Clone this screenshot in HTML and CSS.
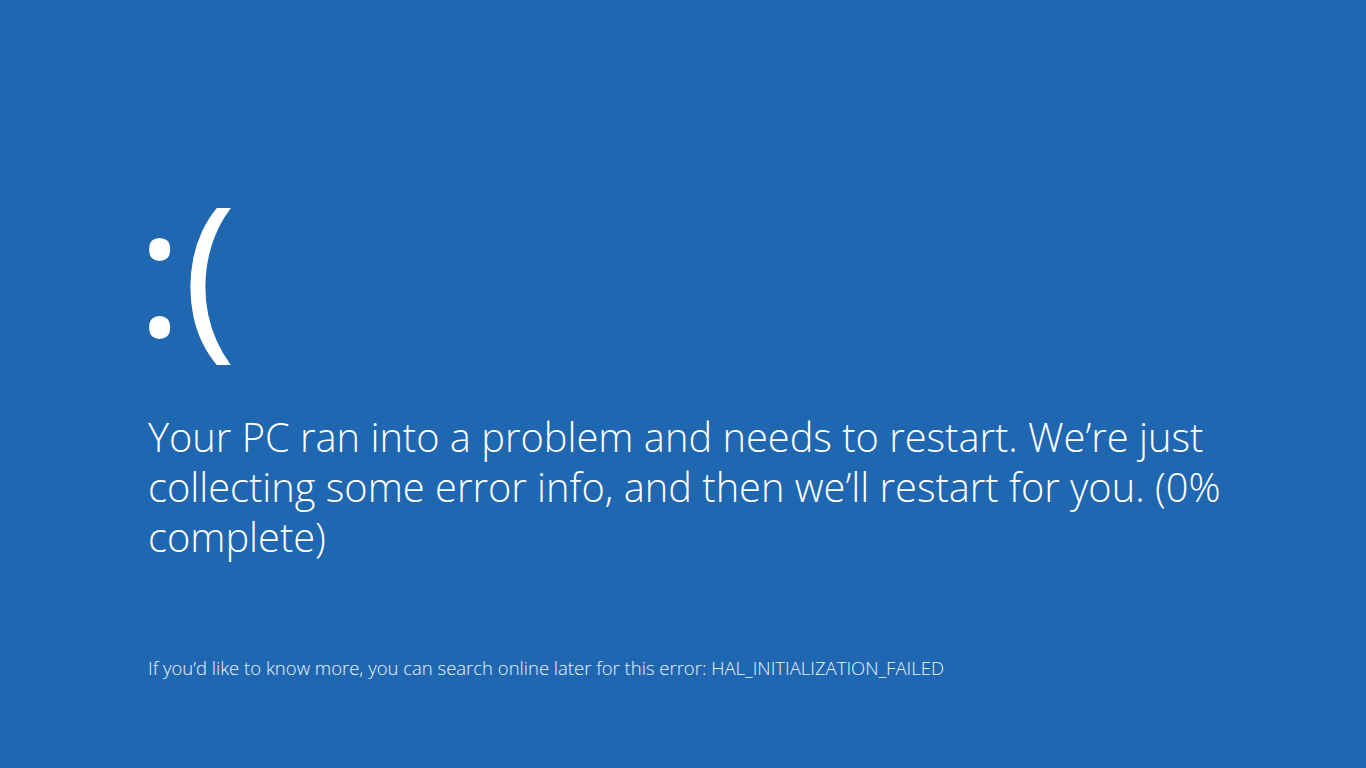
FILE: index.html
```html
<!DOCTYPE html>
<html lang="en">
<head>
<meta charset="utf-8">
<title>Your PC ran into a problem</title>
<link rel="stylesheet" href="styles.css">
</head>
<body>
<main class="bsod">
  <div class="face">:(</div>
  <p class="message">Your PC ran into a problem and needs to restart. We’re just collecting some error info, and then we’ll restart for you. (0% complete)</p>
  <p class="info">If you’d like to know more, you can search online later for this error: HAL_INITIALIZATION_FAILED</p>
</main>
</body>
</html>
```
FILE: styles.css
```css
html, body {
  margin: 0;
  padding: 0;
  height: 100%;
}
body {
  background: #2067b2;
  color: #ffffff;
  font-family: "Open Sans", "Noto Sans", "Liberation Sans", sans-serif;
  font-weight: 300;
}
.bsod {
  display: flex;
  flex-direction: column;
  padding: 158px 0 0 148px;
}
.face {
  font-size: 180px;
  font-weight: 400;
  line-height: 220px;
  height: 220px;
  margin-left: -12px;
}
.message {
  margin: 0;
  margin-top: 34px;
  width: 1120px;
  font-size: 39.8px;
  line-height: 50px;
}
.info {
  margin: 0;
  margin-top: 94px;
  font-size: 18.5px;
  line-height: 24px;
  color: #eef3fa;
}
```
